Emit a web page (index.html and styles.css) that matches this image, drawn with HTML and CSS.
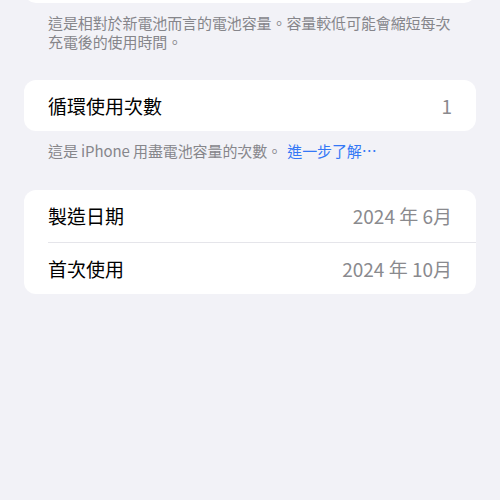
FILE: index.html
```html
<!DOCTYPE html>
<html lang="zh-Hant">

    <head>
        <meta charset="UTF-8">
        <meta name="viewport" content="width=device-width, initial-scale=1.0">
        <title>電池健康度</title>
        <link rel="stylesheet" href="styles.css">
    </head>

    <body>
        <div class="page">
            <div class="group groupTop">
                <div class="row"></div>
            </div>
            <p class="note">這是相對於新電池而言的電池容量。容量較低可能會縮短每次充電後的使用時間。</p>

            <div class="group">
                <div class="row">
                    <span class="label">循環使用次數</span>
                    <span class="value">1</span>
                </div>
            </div>
            <p class="note">這是 iPhone 用盡電池容量的次數。 <a class="more" href="#">進一步了解⋯</a></p>

            <div class="group">
                <div class="row">
                    <span class="label">製造日期</span>
                    <span class="value">2024 年 6月</span>
                </div>
                <div class="row">
                    <span class="label">首次使用</span>
                    <span class="value">2024 年 10月</span>
                </div>
            </div>
        </div>
    </body>

</html>
```

FILE: styles.css
```css
* {
    box-sizing: border-box;
    padding: 0;
    margin: 0;
}

body {
    margin: 0;
    width: 100%;
    height: 100vh;
    background-color: #f2f2f7;
    font-family: "Noto Sans CJK TC", "Noto Sans", sans-serif;
    overflow: hidden;
}

.page {
    padding: 0 24px;
}

.group {
    background-color: #fff;
    border-radius: 12px;
    overflow: hidden;
}

.groupTop {
    margin-top: -48px;
}

.row {
    height: 52px;
    display: flex;
    align-items: center;
    justify-content: space-between;
    padding: 0 24px;
    font-size: 19px;
    position: relative;
}

.group .row:first-child:last-child {
    height: 51px;
}

.row + .row {
    border-top: solid 1px #e5e5ea;
    margin-left: 24px;
    padding-left: 0;
}

.label {
    color: #000;
}

.value {
    color: #8a8a8e;
}

.note {
    font-size: 15px;
    letter-spacing: -0.1px;
    line-height: 18.5px;
    color: #86868b;
    padding: 11px 24px 0 24px;
    margin-bottom: 29px;
}

.more {
    color: #3478f6;
    text-decoration: none;
    margin-left: 2px;
}
```
